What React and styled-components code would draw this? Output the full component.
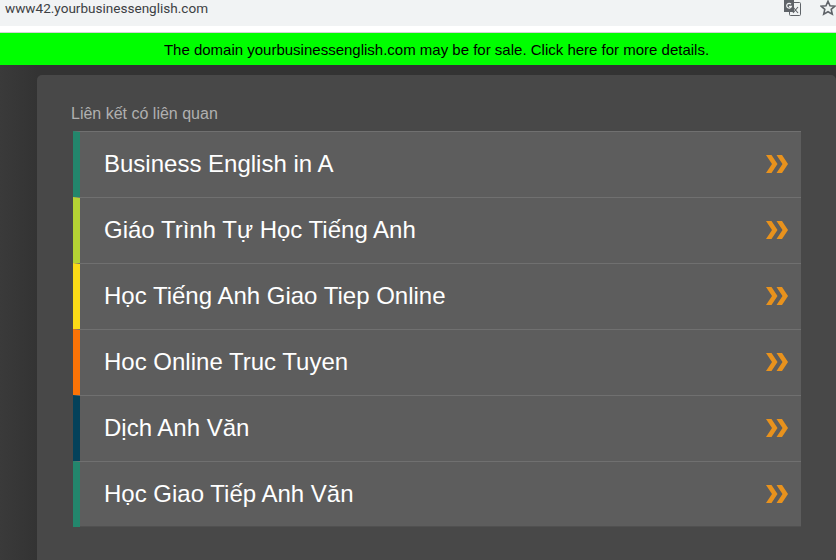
import React from 'react'
import styled, { createGlobalStyle } from 'styled-components'

const GlobalStyle = createGlobalStyle`
html, body {
  margin: 0;
  padding: 0;
  height: 560px;
  overflow: hidden;
  background: #333;
  font-family: "Liberation Sans", Arial, sans-serif;
}
`;

const Page = styled.div`
width: 836px;
height: 560px;
overflow: hidden;
display: flex;
flex-direction: column;
background: linear-gradient(90deg, #3a3a3a 0, #333 38px);
`;

const AddressBar = styled.div`
height: 26px;
flex: none;
background: #f1f3f4;
display: flex;
justify-content: space-between;
padding: 0 0 0 5px;
box-sizing: border-box;
`;

const Url = styled.span`
font-family: Roboto, "Liberation Sans", sans-serif;
font-size: 13.55px;
line-height: 17px;
color: #3c4043;
`;

const BarIcons = styled.div`
display: flex;
align-items: flex-start;
gap: 19px;
`;

const WhiteGap = styled.div`
height: 7px;
flex: none;
background: #fff;
border-bottom: 1px solid #d4d4d4;
box-sizing: border-box;
`;

const Notice = styled.div`
height: 32px;
flex: none;
box-sizing: border-box;
padding-left: 37px;
background: #00ff00;
color: #000;
font-size: 15px;
line-height: 34px;
text-align: center;
`;

const Panel = styled.div`
margin: 10px 0 0 37px;
flex: 1;
background: #484848;
border-radius: 5px 5px 0 0;
padding: 30px 0 0 34px;
`;

const Heading = styled.div`
font-size: 16px;
line-height: 18px;
color: #b0b0b0;
margin-bottom: 8px;
`;

const List = styled.ul`
list-style: none;
margin: 0 0 0 2px;
padding: 0;
width: 728px;
`;

const Row = styled.li`
height: 66px;
box-sizing: border-box;
background: #5d5d5d;
border-top: 1px solid #707070;
border-left: 7px solid ${p => p.$accent};
display: flex;
align-items: center;
justify-content: space-between;
padding: 0 12px 2px 24px;
&:last-child {
  box-shadow: inset 0 -1px #505050;
}
`;

const RowLabel = styled.span`
font-size: 24px;
color: #fff;
`;

const items = [
  { label: 'Business English in A', accent: '#23866c' },
  { label: 'Giáo Trình Tự Học Tiếng Anh', accent: '#b5d334' },
  { label: 'Học Tiếng Anh Giao Tiep Online', accent: '#fbdb17' },
  { label: 'Hoc Online Truc Tuyen', accent: '#fb7306' },
  { label: 'Dịch Anh Văn', accent: '#04415a' },
  { label: 'Học Giao Tiếp Anh Văn', accent: '#23866c' },
]

const Chevrons = () => (
  <svg width="24" height="20" viewBox="0 0 24 20">
    <path d="M1 1h5.5l6 9-6 9H1l6-9z" fill="#e8921d" />
    <path d="M11.5 1H17l6 9-6 9h-5.5l6-9z" fill="#e8921d" />
  </svg>
)

const TranslateIcon = () => (
  <svg width="17" height="16" viewBox="0 0 17 16">
    <rect x="5.5" y="2.5" width="11" height="13" rx="1" fill="#f1f3f4" stroke="#5f6368" />
    <path d="M0 0h10v12H0z" fill="#5f6368" />
    <path d="M7 4.2a2.4 2.4 0 1 0 .4 2.2H5" fill="none" stroke="#f1f3f4" strokeWidth="1.2" />
    <path d="M9 7l5 6M14 7l-5 6" stroke="#5f6368" strokeWidth="1.1" />
  </svg>
)

const StarIcon = () => (
  <svg width="16" height="16" viewBox="0 0 16 16">
    <path d="M8 1.2l2 4.5 4.9.5-3.7 3.2 1.1 4.8L8 11.7l-4.3 2.5 1.1-4.8L1.1 6.2 6 5.7z" fill="none" stroke="#5f6368" strokeWidth="1.6" />
  </svg>
)

const App = () => {
  return (
    <Page>
      <GlobalStyle />
      <AddressBar>
        <Url>www42.yourbusinessenglish.com</Url>
        <BarIcons>
          <TranslateIcon />
          <StarIcon />
        </BarIcons>
      </AddressBar>
      <WhiteGap />
      <Notice>The domain yourbusinessenglish.com may be for sale. Click here for more details.</Notice>
      <Panel>
        <Heading>Liên kết có liên quan</Heading>
        <List>
          {items.map(item => (
            <Row key={item.label} $accent={item.accent}>
              <RowLabel>{item.label}</RowLabel>
              <Chevrons />
            </Row>
          ))}
        </List>
      </Panel>
    </Page>
  )
}

export default App
